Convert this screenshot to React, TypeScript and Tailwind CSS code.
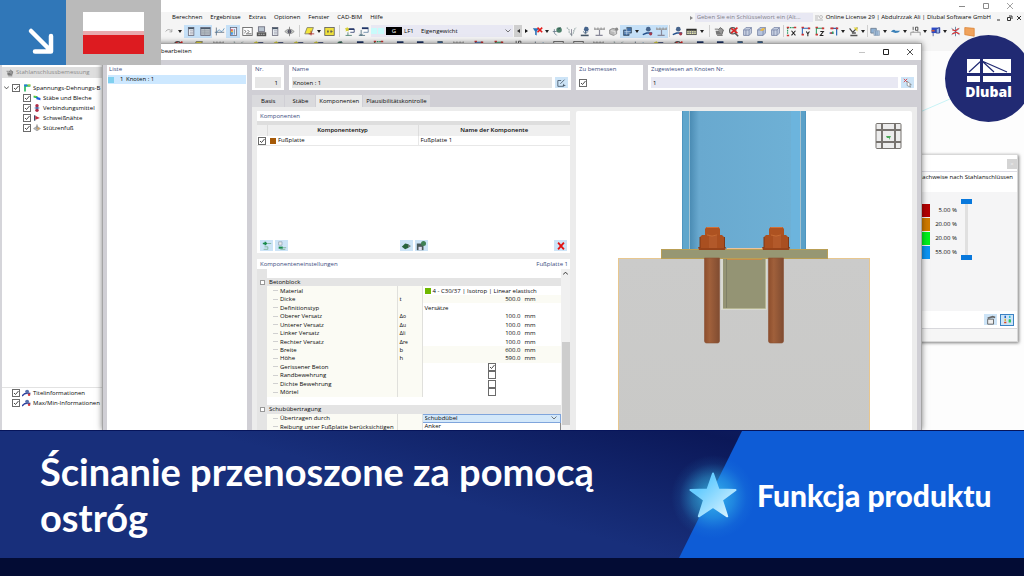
import React from 'react';

type Glyph =
  | 'undo' | 'panel' | 'grid' | 'curve' | 'rainbow' | 'form' | 'res' | 'eye' | 'para' | 'ysq' | 'star' | 'win'
  | 'funnelX' | 'leaf' | 'funnel' | 'load' | 'dim' | 'cubes' | 'steps' | 'table' | 'robot' | 'magX' | 'box' | 'boxY'
  | 'axisX' | 'axisY' | 'axisZ' | 'axisR' | 'lamp' | 'stack' | 'wing' | 'ruler' | 'monitor' | 'snow' | 'orange' | 'member';

const glyphs: Record<Glyph, React.ReactNode> = {
  undo: <path d="M2 7Q6 2 10 7M10 4v3.500H7" fill="none" stroke="#999" />,
  panel: <><rect x="3" y="2" width="7" height="10" fill="#e9eef3" stroke="#667" /><path d="M3 3h7" stroke="#456" strokeWidth="2" /><path d="M5 6h4M5 8h4M5 10h4" stroke="#889" strokeWidth=".7" /></>,
  grid: <><rect x="1" y="2" width="12" height="10" fill="#b8bfc6" stroke="#667" /><path d="M1 3h12" stroke="#456" strokeWidth="1.500" /><path d="M2 6h10M2 8h10M2 10h10M6 4v8" stroke="#8a929a" strokeWidth=".6" /></>,
  curve: <><path d="M3 2v10M1 8h12" stroke="#567" strokeWidth="1" /><path d="M3 9Q6 3 8 6T13 3" fill="none" stroke="#4a86b8" /></>,
  rainbow: <><rect x="3" y="2" width="8" height="10" fill="#eef" stroke="#667" /><path d="M5 4v3" stroke="#e33" strokeWidth="2" /><path d="M5 6v3" stroke="#dc3" strokeWidth="2" /><path d="M5 8v3" stroke="#28e" strokeWidth="2" /><path d="M8 4v7" stroke="#478" strokeWidth="1" /></>,
  form: <><rect x="1" y="2" width="12" height="10" fill="#fff" stroke="#555" /><path d="M3 5l2 2-2 2M7 5l2 2-2 2M5 10h7" fill="none" stroke="#444" /></>,
  res: <><rect x="3" y="1" width="8" height="6" fill="#b9c4cf" stroke="#667" /><rect x="1" y="8" width="12" height="5" fill="#555" /><path d="M3 10.500h8" stroke="#ddd" strokeDasharray="2 1" /></>,
  eye: <><path d="M1 7Q7 1 13 7Q7 13 1 7Z" fill="#c8ccc8" stroke="#888" /><circle cx="7" cy="7" r="2.500" fill="#556" /><path d="M7 1v12" stroke="#777" /></>,
  para: <><path d="M4 2h8l-3 8H1z" fill="#f2e53a" stroke="#776" /><path d="M9 6v6M6 10h7" stroke="#a22" /></>,
  ysq: <><rect x="1" y="2" width="12" height="10" fill="#f0e13c" stroke="#555" /><path d="M4 7h2M8 7h3M5 5v4M9 5v4" stroke="#555" /></>,
  star: <><path d="M5 6V4h8v4H8" fill="#fff" stroke="#236" /><path d="M6 4h7" stroke="#236" strokeWidth="2" /><path d="M4 1l1 2h2L5.500 5 6 7 4 6 2 7l.500-2L1 3h2z" fill="#d7cf30" /><path d="M5 8v4M2 12h8" stroke="#476" /></>,
  win: <><path d="M5 2h8v6H7" fill="#fff" stroke="#579" /><path d="M5 3h8" stroke="#236" strokeWidth="2" /><path d="M4 5v7M1 12h8M2 10l2 2 2-2" fill="none" stroke="#467" /></>,
  funnelX: <><path d="M1 3h8L6 7v5L4 11V7z" fill="#2b72b8" /><path d="M7 2l6 6M13 2l-6 6" stroke="#e31b1b" strokeWidth="2" /></>,
  leaf: <><path d="M3 4v5l3 3M1 7h5" stroke="#678" fill="none" /><circle cx="9" cy="5" r="3.500" fill="#4c7f6a" /><path d="M8 4l3-2" stroke="#244" /></>,
  funnel: <><path d="M1 2l3 3v3l3 4 3-4V5l3-3" fill="none" stroke="#9aa" strokeWidth="1.500" strokeDasharray="2 1" /><path d="M7 4v8" stroke="#778" /></>,
  load: <><path d="M7 1v8M4 7l3 3 3-3" stroke="#246" fill="none" /><circle cx="8" cy="4" r="3" fill="#46648c" /><path d="M1 12h10" stroke="#456" strokeWidth="2" /></>,
  member: <><path d="M1 11l5-2h7" stroke="#24508c" strokeWidth="2" fill="none" /><circle cx="8" cy="4" r="3" fill="#46648c" /><circle cx="11" cy="10" r="2" fill="#a33b4b" /></>,
  dim: <><path d="M1 2v3M5 2v3M9 2v3M13 2v3M1 4h12" stroke="#999" strokeWidth="1.500" /><path d="M7 5v6M2 12h9" stroke="#889" strokeWidth="1.500" /></>,
  cubes: <><path d="M2 5l4-2 5 1v6l-4 2-5-2z" fill="#b9b9b9" stroke="#888" /><path d="M4 6l5 1v4" stroke="#eee" fill="none" /><circle cx="11" cy="4" r="2" fill="#888" /></>,
  steps: <><path d="M2 12V5h4V2h6v7H9v3z" fill="#3f6ea6" stroke="#456" /><path d="M3 7h8M3 9h7M6 3v8" stroke="#cfe0f0" strokeWidth=".8" /></>,
  table: <><rect x="1" y="4" width="12" height="7" fill="#e7e9b0" stroke="#333" /><path d="M1 5h12" stroke="#222" strokeWidth="2" /><path d="M4 5v6M7 5v6M10 5v6M1 8h12" stroke="#667" strokeWidth=".8" /></>,
  robot: <><path d="M2 6h8v5H3z" fill="#777" /><path d="M5 5l3-3 4 3-2 6" fill="#999" stroke="#555" /><path d="M1 4h4M4 12h7" stroke="#555" /></>,
  magX: <><circle cx="6" cy="6" r="4" fill="#ddd" stroke="#555" strokeWidth="1.500" /><path d="M9 9l4 4" stroke="#555" strokeWidth="2" /><path d="M4 3l8 6M12 2L4 9" stroke="#d22" strokeWidth="2" /></>,
  box: <><path d="M2 5l3-3h7v7l-3 3H2z" fill="#c7d0e2" stroke="#7683a5" /><path d="M2 5h7v7M9 5l3-3M5 5v7" fill="none" stroke="#7683a5" /></>,
  boxY: <><path d="M2 5l3-3h7v7l-3 3H2z" fill="#b8c5de" stroke="#7683a5" /><path d="M2 5h7v7M9 5l3-3" fill="none" stroke="#7683a5" /><path d="M5 6l3-3h4L9 6z" fill="#efb93d" /></>,
  axisX: <><path d="M2 2v9M2 2h9" stroke="#2b9c63" strokeDasharray="2 1" strokeWidth="1.500" /><path d="M1 2h3M10 2h3M1 12h3" stroke="#c33" strokeWidth="2" /><path d="M7 6l5 6M12 6l-5 6" stroke="#222" strokeWidth="1.300" /></>,
  axisY: <><path d="M3 2v9M3 3h9" stroke="#2868b8" strokeWidth="1.300" /><path d="M2 2h3M2 11h3M10 3h3" stroke="#c33" strokeWidth="2" /><path d="M8 7l2 3 2-3M10 10v3" stroke="#222" fill="none" strokeWidth="1.300" /></>,
  axisZ: <><path d="M3 2v9M3 3h9" stroke="#2b9c63" strokeWidth="1.300" /><path d="M2 2h3M2 11h3M10 3h3" stroke="#c33" strokeWidth="2" /><path d="M8 7h4l-4 5h4" stroke="#222" fill="none" strokeWidth="1.300" /></>,
  axisR: <><path d="M11 2v10M4 3h8M2 9h5" stroke="#2868b8" strokeWidth="1.500" /><path d="M3 3h4M3 9h3M10 3h3" stroke="#c33" strokeWidth="2" /><path d="M6 7v3" stroke="#2b9c63" strokeWidth="2" /></>,
  lamp: <><path d="M2 3l4 5M6 8l6-6" stroke="#444" strokeWidth="1.500" /><path d="M7 2h5v5z" fill="#e5d741" /><path d="M3 12h9M5 9h5" stroke="#555" strokeWidth="2" /></>,
  stack: <><path d="M1 3h7v6H1z" fill="#8fb2d5" stroke="#678" /><path d="M5 6h7v6H5z" fill="#a9c2dc" stroke="#9ab" /><path d="M7 6v6M9 6v6" stroke="#7a98b8" /></>,
  wing: <path d="M1 7q4-4 6-1h6q-2 3-6 3z" fill="#3b81b8" />,
  ruler: <><path d="M1 12V8h12v4M4 8V6M10 8V6" stroke="#888" fill="none" /><path d="M4 1v4M7 1.500h3v4H7z" stroke="#333" fill="none" /></>,
  monitor: <><path d="M2 2h11v7H2z" fill="#2b49c8" /><path d="M4 9v4M8 4l4-2v7H8z" fill="#9ab6ed" stroke="#348" /><path d="M2 6h4" stroke="#c53" strokeWidth="2" /></>,
  snow: <><path d="M2 3l10 8M12 3L2 11M7 1v12" stroke="#4a6e91" /><path d="M3 5l4 1 4-3M3 10l5-2 4 2" stroke="#d33" fill="none" strokeWidth="1.500" /></>,
  orange: <path d="M1 2l12 1v10L1 11z" fill="#f0a35c" stroke="#db8438" />,
};

const Icon = ({ g, small }: { g: Glyph; small?: boolean }) => (
  <svg viewBox="0 0 14 14" className={small ? 'size-2 shrink-0' : 'size-[11px] shrink-0'} aria-hidden="true">
    {glyphs[g]}
  </svg>
);

const Tool = ({ g, on }: { g: Glyph; on?: boolean }) => (
  <button aria-label={g} className={`flex h-[13px] w-[14px] shrink-0 items-center justify-center ${on ? 'bg-[#c5e0f7]' : ''}`}>
    <Icon g={g} />
  </button>
);

const Caret = ({ on, wide }: { on?: boolean; wide?: boolean }) => (
  <button aria-label="Mehr" className={`flex h-[13px] shrink-0 items-center justify-center ${wide ? 'w-2' : 'w-[6px]'} ${on ? 'bg-[#c5e0f7]' : ''}`}>
    <svg viewBox="0 0 4 3" className="h-[3px] w-1"><path d="M0 0h4L2 3z" fill="#222" /></svg>
  </button>
);

const Sep = ({ wide }: { wide?: boolean }) => (
  <span className={`flex h-3 shrink-0 justify-center ${wide ? 'w-[6px]' : 'w-[2px]'}`}>
    <span className="w-px bg-[#cfcfcf]" />
  </span>
);

const Check = ({ id, checked, label }: { id: string; checked?: boolean; label?: string }) => (
  <span className="inline-grid size-2 shrink-0">
    <input
      id={id}
      type="checkbox"
      defaultChecked={checked}
      aria-label={label}
      className="peer col-start-1 row-start-1 size-2 appearance-none border border-[#6b6b6b] bg-white"
    />
    <svg viewBox="0 0 8 8" className="pointer-events-none invisible col-start-1 row-start-1 size-2 peer-checked:visible">
      <path d="M2 4l1.500 1.500L6.500 2" fill="none" stroke="#333" strokeWidth=".9" />
    </svg>
  </span>
);

const WinButtons = ({ muted }: { muted?: boolean }) => (
  <div className={`flex items-center gap-[18px] ${muted ? 'text-[#8a8a8a]' : 'text-[#222]'}`}>
    <button aria-label="Minimieren" className={muted ? '' : 'text-[#c4c4c4]'}>
      <svg viewBox="0 0 6 6" className="size-[6px]"><path d="M0 3.500h6" stroke="currentColor" /></svg>
    </button>
    <button aria-label="Maximieren">
      <svg viewBox="0 0 6 6" className="size-[6px]"><path d="M.500 .500h5v5h-5z" fill="none" stroke="currentColor" /></svg>
    </button>
    <button aria-label="Schließen">
      <svg viewBox="0 0 6 6" className="size-[6px]"><path d="M0 0l6 6M6 0L0 6" stroke="currentColor" strokeWidth=".8" /></svg>
    </button>
  </div>
);

const menu = ['Berechnen', 'Ergebnisse', 'Extras', 'Optionen', 'Fenster', 'CAD-BIM', 'Hilfe'];

function MainToolbar() {
  return (
    <div className="flex h-4 items-center pl-[162px]">
      <Tool g="undo" /><Caret wide />
      <Tool g="panel" on /><Tool g="grid" on /><Tool g="curve" /><Tool g="rainbow" on /><Tool g="form" />
      <Tool g="res" /><Tool g="panel" /><Tool g="eye" /><Sep wide />
      <Tool g="para" /><Caret /><Tool g="ysq" /><Sep wide /><Tool g="star" /><Tool g="win" />
      <div className="mx-px flex h-3 w-[142px] shrink-0 items-center bg-[#e8e8f3] pr-[2px]">
        <span className="mr-px h-[6px] w-[6px] bg-[#c9fbfb]" />
        <span className="mr-[2px] h-[6px] w-[6px] bg-[#c9fbfb]" />
        <span className="mr-[2px] flex h-2 w-4 items-center justify-center bg-black text-[6px] leading-none text-white">G</span>
        <label htmlFor="loadcase" className="mr-[7px] w-[10px]">LF1</label>
        <select id="loadcase" className="flex-1 appearance-none bg-transparent leading-[10px] outline-none">
          <option>Eigengewicht</option>
        </select>
        <svg viewBox="0 0 6 4" className="h-1 w-[6px]"><path d="M.500 .500L3 3 5.500 .500" fill="none" stroke="#555" strokeWidth=".8" /></svg>
      </div>
      <button aria-label="Zurück" className="flex h-3 w-2 shrink-0 items-center justify-center bg-[#cfcfcf]">
        <svg viewBox="0 0 3 4" className="h-1 w-[3px]"><path d="M3 0v4L0 2z" fill="#333" /></svg>
      </button>
      <button aria-label="Weiter" className="flex h-3 w-2 shrink-0 items-center justify-center">
        <svg viewBox="0 0 3 4" className="h-1 w-[3px]"><path d="M0 0v4l3-2z" fill="#111" /></svg>
      </button>
      <Tool g="funnelX" /><Caret /><Tool g="leaf" /><Tool g="funnel" /><Tool g="load" /><Tool g="dim" /><Tool g="cubes" />
      <Tool g="steps" on /><Caret on /><Tool g="member" on /><Tool g="dim" on /><Sep />
      <Tool g="member" /><Tool g="table" /><Caret wide /><Sep wide />
      <Tool g="robot" /><Tool g="magX" /><Tool g="box" /><Tool g="boxY" /><Tool g="box" /><Sep />
      <Tool g="axisX" /><Tool g="axisY" /><Tool g="axisZ" /><Tool g="axisR" /><Caret />
      <Tool g="lamp" /><Caret /><Sep /><Tool g="stack" /><Caret /><Tool g="wing" /><Caret /><Tool g="ruler" /><Caret />
      <Tool g="monitor" /><Caret /><Tool g="snow" /><Tool g="orange" />
    </div>
  );
}

const lowerTools: Glyph[] = [
  'magX', 'para', 'dim', 'funnel', 'star', 'star', 'star', 'star', 'leaf', 'win', 'axisX', 'win', 'win', 'steps', 'dim',
  'axisY', 'axisZ', 'ruler', 'curve', 'form', 'form', 'dim', 'funnel', 'curve', 'star', 'magX', 'win', 'win', 'steps', 'steps',
];

const tree: { label: string; icon: React.ReactNode }[] = [
  { label: 'Stäbe und Bleche', icon: <><path d="M1 3l7 1v4L1 6z" fill="#22c04c" /><path d="M6 5l7 2v4L6 9z" fill="#1f5fe0" /><path d="M1 3h4v2z" fill="#ddd02c" /></> },
  { label: 'Verbindungsmittel', icon: <><circle cx="7" cy="3" r="3" fill="#b12b45" /><circle cx="7" cy="11" r="3" fill="#b12b45" /><path d="M3 7h8M7 5v4" stroke="#34569a" strokeWidth="2" /></> },
  { label: 'Schweißnähte', icon: <><path d="M3 2v10" stroke="#235" strokeWidth="2" /><path d="M4 3l8 4-8 3z" fill="#c22d3d" /></> },
  { label: 'Stützenfuß', icon: <><path d="M1 8l6-4 6 4-6 4z" fill="#b7bcc2" stroke="#888" /><path d="M7 1v8" stroke="#888" strokeWidth="2" /><circle cx="9" cy="8" r="2" fill="#d8a35a" /></> },
];

function Navigator() {
  return (
    <aside className="flex w-[105px] shrink-0 flex-col overflow-hidden border-l-2 border-[#d5d5da] bg-white pt-[16px] whitespace-nowrap">
      <h2 className="flex h-[11px] shrink-0 items-center gap-[2px] bg-[#dedede] pl-1 text-[#8a8a8a]">
        <Icon g="robot" small />Stahlanschlussbemessung
      </h2>
      <ul className="flex-1 pt-[5px]">
        <li className="flex h-[10px] items-center gap-[2px] pl-[2px]">
          <svg viewBox="0 0 6 4" className="mr-px h-1 w-[5px]"><path d="M0 0l3 3 3-3" fill="none" stroke="#333" /></svg>
          <Check id="t-root" checked />
          <svg viewBox="0 0 14 14" className="ml-px size-2 shrink-0"><path d="M2 1v12h3V5h8V1z" fill="#2fba64" /><path d="M2 1h5v3H2z" fill="#2976e6" /><path d="M9 1h4v2H9z" fill="#d6cc39" /></svg>
          <label htmlFor="t-root">Spannungs-Dehnungs-B</label>
        </li>
        {tree.map((t, i) => (
          <li key={t.label} className="flex h-[10px] items-center gap-[2px] pl-[21px]">
            <Check id={`t-${i}`} checked />
            <svg viewBox="0 0 14 14" className="size-2 shrink-0">{t.icon}</svg>
            <label htmlFor={`t-${i}`}>{t.label}</label>
          </li>
        ))}
      </ul>
      <ul className="h-[43px] shrink-0 border-t border-[#e2e2e2]">
        {['Titelinformationen', 'Max/Min-Informationen'].map((t) => (
          <li key={t} className="flex h-[10px] items-center gap-[2px] pl-[10px]">
            <Check id={t} checked />
            <svg viewBox="0 0 14 14" className="size-[9px] shrink-0"><path d="M0 11q4-6 13-4" fill="none" stroke="#2b3f9e" strokeWidth="2" /><circle cx="8" cy="4" r="3" fill="#5770ad" /><circle cx="11" cy="9" r="2" fill="#d43b3b" /></svg>
            <label htmlFor={t}>{t}</label>
          </li>
        ))}
      </ul>
    </aside>
  );
}

const Field = ({ label, id, className, children }: { label: string; id: string; className: string; children: React.ReactNode }) => (
  <div className={`flex h-[25px] flex-col justify-between bg-white px-[3px] pb-[2px] ${className}`}>
    <label htmlFor={id} className="text-[#3c4d80]">{label}</label>
    <div className="flex items-center gap-[3px]">{children}</div>
  </div>
);

const SmallButton = ({ label, children }: { label: string; children: React.ReactNode }) => (
  <button aria-label={label} className="flex h-[11px] w-[13px] shrink-0 items-center justify-center bg-[#cde4f7]">
    <svg viewBox="0 0 12 12" className="size-[10px]">{children}</svg>
  </button>
);

type Row = { name: string; sym?: string; sub?: string; value?: string; unit?: string; check?: boolean; kind: 'num' | 'calc' | 'text' | 'check' | 'material' };

const concreteRows: Row[] = [
  { name: 'Material', kind: 'material', value: '4 - C30/37 | Isotrop | Linear elastisch' },
  { name: 'Dicke', sym: 't', kind: 'calc', value: '500.0', unit: 'mm' },
  { name: 'Definitionstyp', kind: 'text', value: 'Versätze' },
  { name: 'Oberer Versatz', sym: 'Δ', sub: 'o', kind: 'num', value: '100.0', unit: 'mm' },
  { name: 'Unterer Versatz', sym: 'Δ', sub: 'u', kind: 'num', value: '100.0', unit: 'mm' },
  { name: 'Linker Versatz', sym: 'Δ', sub: 'li', kind: 'num', value: '100.0', unit: 'mm' },
  { name: 'Rechter Versatz', sym: 'Δ', sub: 're', kind: 'num', value: '100.0', unit: 'mm' },
  { name: 'Breite', sym: 'b', kind: 'calc', value: '600.0', unit: 'mm' },
  { name: 'Höhe', sym: 'h', kind: 'calc', value: '590.0', unit: 'mm' },
  { name: 'Gerissener Beton', kind: 'check', check: true },
  { name: 'Randbewehrung', kind: 'check', check: false },
  { name: 'Dichte Bewehrung', kind: 'check', check: false },
  { name: 'Mörtel', kind: 'check', check: false },
];

const NameCells = ({ name, sym, sub }: { name: string; sym?: string; sub?: string }) => (
  <>
    <td className="bg-[#e4e4e4] p-0" />
    <td className="border-r border-[#e0e0dc] bg-[#fbfbf4] p-0">
      <span className="flex items-center gap-[2px] overflow-visible whitespace-nowrap"><span className="ml-[6px] h-px w-[5px] bg-[#d0d0d0]" />{name}</span>
    </td>
    <td className="border-r border-[#e0e0dc] bg-[#fbfbf4] p-0 pl-[2px]">
      {sym}{sub && <span className="text-[5px]">{sub}</span>}
    </td>
  </>
);

const GroupRow = ({ title }: { title: string }) => (
  <tr>
    <td className="bg-[#e4e4e4] p-0">
      <button aria-label={`${title} einklappen`} className="ml-[3px] block size-[5px] border border-[#999] bg-white" />
    </td>
    <td colSpan={4} className="bg-[#e4e4e4] p-0 pl-[2px]">{title}</td>
  </tr>
);

function SettingsTable() {
  return (
    <table className="h-[153px] w-full table-fixed border-collapse leading-[8px]">
      <colgroup>
        <col className="w-[10px]" /><col className="w-[130px]" /><col className="w-[25px]" /><col /><col className="w-[39px]" />
      </colgroup>
      <tbody>
        <GroupRow title="Betonblock" />
        {concreteRows.map((r) => (
          <tr key={r.name}>
            <NameCells name={r.name} sym={r.sym} sub={r.sub} />
            {r.kind === 'num' || r.kind === 'calc' ? (
              <>
                <td className={`p-0 pr-px text-right ${r.kind === 'calc' ? 'bg-[#fbfbf4]' : ''}`}>{r.value}</td>
                <td className={`p-0 pl-[3px] ${r.kind === 'calc' ? 'bg-[#fbfbf4]' : ''}`}>{r.unit}</td>
              </>
            ) : (
              <td colSpan={2} className="p-0 px-[2px]">
                {r.kind === 'material' && (
                  <span className="flex items-center gap-[2px]"><span className="size-[6px] bg-[#6fb800]" />{r.value}</span>
                )}
                {r.kind === 'text' && r.value}
                {r.kind === 'check' && <span className="flex justify-center"><Check id={r.name} label={r.name} checked={r.check} /></span>}
              </td>
            )}
          </tr>
        ))}
        <tr><td className="bg-[#e4e4e4] p-0" /><td colSpan={4} className="p-0">&nbsp;</td></tr>
        <GroupRow title="Schubübertragung" />
        <tr>
          <NameCells name="Übertragen durch" />
          <td colSpan={2} className="border border-[#7fa5dc] bg-[#d3e8fa] p-0">
            <span className="flex items-center pr-[3px] pl-[2px]">
              <select aria-label="Übertragen durch" className="h-[7px] flex-1 appearance-none bg-transparent leading-[7px] outline-none">
                <option>Schubdübel</option><option>Anker</option>
              </select>
              <svg viewBox="0 0 6 4" className="h-1 w-[6px]"><path d="M.500 .500L3 3 5.500 .500" fill="none" stroke="#555" strokeWidth=".8" /></svg>
            </span>
          </td>
        </tr>
        <tr>
          <NameCells name="Reibung unter Fußplatte berücksichtigen" />
          <td colSpan={2} className="border-r border-[#888] p-0 pl-[2px] align-top leading-[6px]">Anker</td>
        </tr>
      </tbody>
    </table>
  );
}

function ModelView() {
  return (
    <svg viewBox="576 111 336 319" preserveAspectRatio="xMidYMin slice" className="h-full w-full" role="img" aria-label="3D-Ansicht der Fußplatte">
      <defs>
        <linearGradient id="web"><stop offset="0" stopColor="#4b8cb4" /><stop offset=".09" stopColor="#69a9cf" /><stop offset="1" stopColor="#6eb0d5" /></linearGradient>
        <linearGradient id="rod"><stop offset="0" stopColor="#8d4e2d" /><stop offset=".35" stopColor="#a0603b" /><stop offset="1" stopColor="#804c31" /></linearGradient>
        <linearGradient id="block" x1="0" y1="0" x2="0" y2="1"><stop offset="0" stopColor="#cbcbca" /><stop offset="1" stopColor="#c9c9c7" /></linearGradient>
      </defs>
      <rect x="682" y="111" width="124" height="139" fill="#6db4dc" />
      <rect x="682" y="111" width="7" height="139" fill="#5fa6cc" />
      <rect x="690" y="111" width="101" height="139" fill="url(#web)" />
      <rect x="791" y="111" width="9" height="139" fill="#6cb4dd" />
      <rect x="801" y="111" width="5" height="139" fill="#5aa0c8" />
      <path d="M689.500 111v139M800.500 111v139" stroke="#a5c3d1" />
      <path d="M682.500 111v139M805.500 111v139" stroke="#4f95bf" />
      <rect x="618.500" y="258.500" width="251" height="180" fill="url(#block)" stroke="#e8c78f" />
      <rect x="721" y="258" width="46" height="52" fill="#d9dad2" />
      <rect x="723" y="258" width="42" height="51" fill="#949474" />
      <path d="M726.500 259v49" stroke="#7f8067" />
      <path d="M723 308.500h42.500V259" fill="none" stroke="#b6b693" />
      <path d="M727 259.500h35" stroke="#c58c4b" />
      <rect x="661.500" y="249.500" width="166" height="9" fill="#979773" stroke="#b99f56" />
      <path d="M727 248.500h36" stroke="#edc49b" />
      {[712, 776].map((x) => (
        <g key={x} transform={`translate(${x} 0)`}>
          <path d="M-7.500 258h15v83q0 2-2 2h-11q-2 0-2-2z" fill="url(#rod)" stroke="#8a5034" strokeWidth=".6" />
          <path d="M-14 247h28l-1 3h-26z" fill="#96431a" />
          <path d="M-12 237l2-2h20l2 2v11h-24z" fill="#a94f20" />
          <path d="M-3 236h8v12h-8z" fill="#b2592a" />
          <path d="M-12 237v11M12.500 237v11" stroke="#7f3917" />
          <path d="M-7 229l1.500-2h12L8 229v6H-7z" fill="#ad5221" />
          <path d="M-5.500 227.500h12" stroke="#d27138" />
          <path d="M-5 235q5 2 10 0" fill="none" stroke="#cd7138" strokeWidth=".8" />
        </g>
      ))}
      <g fill="#ececec" stroke="#77736f">
        <rect x="876" y="123.500" width="25" height="25" rx="1" />
        <path d="M882 123.500v25M895 123.500v25M876 130h25M876 142h25" strokeWidth="2" />
      </g>
      <path d="M886 136h5l-2 4v-2h-2z" fill="#4aa858" />
    </svg>
  );
}

function Components() {
  return (
    <section className="flex h-[142px] shrink-0 flex-col bg-white">
      <h3 className="h-[10px] px-[3px] leading-[11px] text-[#3c4d80]">Komponenten</h3>
      <table className="w-full table-fixed border-collapse leading-[9px]">
        <colgroup><col className="w-[10px]" /><col /><col className="w-[152px]" /></colgroup>
        <thead>
          <tr className="h-1 bg-[#dedede]"><td className="p-0" colSpan={3} /></tr>
          <tr className="bg-[#efefef] leading-[11px]">
            <th className="border-r border-[#ddd] p-0" />
            <th className="border-r border-[#ddd] p-0 font-semibold">Komponententyp</th>
            <th className="p-0 font-semibold">Name der Komponente</th>
          </tr>
        </thead>
        <tbody>
          <tr className="border-b border-[#e8e8e8]">
            <td className="p-0 pl-px"><span className="flex"><Check id="comp" label="Fußplatte aktiv" checked /></span></td>
            <td className="border-r border-[#e8e8e8] p-0 pl-[3px]"><span className="flex items-center gap-[2px]"><span className="size-[6px] bg-[#a65a08]" />Fußplatte</span></td>
            <td className="p-0 pl-[2px]">Fußplatte 1</td>
          </tr>
        </tbody>
      </table>
      <div className="mt-auto flex justify-between px-[3px] pb-[2px]">
        <span className="flex w-[28px] gap-[2px]">
          <SmallButton label="Einfügen davor"><path d="M1 3h5M4 1v4" stroke="#198b4b" strokeWidth="2" /><path d="M6 3h5M3 7h4v3H2" stroke="#7bb396" fill="none" /></SmallButton>
          <SmallButton label="Einfügen danach"><path d="M2 1h4v4H2z" stroke="#9ab" fill="#eee" /><path d="M2 8h5" stroke="#198b4b" strokeWidth="2.500" /><path d="M7 8h4M4 10h6" stroke="#7bb396" /></SmallButton>
        </span>
        <span className="flex gap-[2px]">
          <SmallButton label="Bibliothek"><path d="M1 7l4-4 4 1v4l-4 2z" fill="#27633c" /><path d="M8 4l4 2-3 2" fill="#6a776e" /></SmallButton>
          <SmallButton label="Speichern"><path d="M1 3h8v8H1z" fill="#4c5a5c" /><path d="M3 7h4v4H3z" fill="#dde" /><circle cx="9" cy="3" r="3" fill="#3f8055" /></SmallButton>
        </span>
        <span className="flex w-[28px] justify-end">
          <SmallButton label="Löschen"><path d="M2.500 2l7 8M9.500 2l-7 8" stroke="#e21414" strokeWidth="2.200" /></SmallButton>
        </span>
      </div>
    </section>
  );
}

function Dialog() {
  const tabs = ['Basis', 'Stäbe', 'Komponenten', 'Plausibilitätskontrolle'];
  return (
    <section className="absolute top-[43px] right-[102px] bottom-0 left-[102px] flex flex-col overflow-hidden border-x border-t border-[#a5a5a5] bg-[#d0cfd5] shadow-[0_0_6px_rgba(0,0,0,0.5)]">
      <header className="flex h-4 shrink-0 items-center justify-between bg-white pr-[8px] pb-px pl-[58px]">
        <h1>bearbeiten</h1>
        <WinButtons />
      </header>
      <div className="flex min-h-0 flex-1 gap-[5px] px-1 pt-[5px]">
        <div className="flex w-[140px] shrink-0 flex-col bg-white">
          <h2 className="h-[10px] px-[2px] text-[#3c4d80]">Liste</h2>
          <ul className="flex-1 px-px">
            <li className="flex h-[9px] items-center bg-[#cde8ff]">
              <span className="mr-[6px] size-[6px] bg-[#7fd0ef]" /><span className="w-[6px]">1</span>Knoten : 1
            </li>
          </ul>
        </div>
        <div className="flex min-w-0 flex-1 flex-col">
          <div className="flex gap-[5px]">
            <Field label="Nr." id="nr" className="w-8">
              <input id="nr" defaultValue="1" className="h-[11px] w-full bg-[#e6e6e6] px-[3px] text-right outline-none" />
            </Field>
            <Field label="Name" id="name" className="w-[282px]">
              <input id="name" defaultValue="Knoten : 1" className="h-[11px] min-w-0 flex-1 bg-[#e6e6e6] px-px outline-none" />
              <SmallButton label="Name bearbeiten"><path d="M5 3H1v7h7V7M4 7l5-5M7 9h3" fill="none" stroke="#456" /></SmallButton>
            </Field>
            <Field label="Zu bemessen" id="design" className="w-[67px]">
              <span className="flex h-[11px] items-center"><Check id="design" checked /></span>
            </Field>
            <Field label="Zugewiesen an Knoten Nr." id="assigned" className="flex-1">
              <input id="assigned" defaultValue="1" className="h-[11px] min-w-0 flex-1 bg-[#e8e8f3] px-[2px] outline-none" />
              <SmallButton label="Knoten wählen"><path d="M1 1l4 4M5 1L1 5" stroke="#d33" /><path d="M5 4l5 4H8l1 3-2-1-2-1z" fill="#fff" stroke="#666" strokeWidth=".7" /></SmallButton>
            </Field>
          </div>
          <nav className="mt-[5px] flex h-3 shrink-0">
            {tabs.map((t) => (
              <button key={t} className={`mr-px px-[3px] first:px-[9px] nth-[2]:px-[7px] ${t === 'Komponenten' ? 'bg-[#ececec]' : 'bg-[#dadadd]'}`}>{t}</button>
            ))}
          </nav>
          <div className="flex min-h-0 flex-1 gap-[6px] bg-[#ececec] px-[5px] pt-1">
            <div className="flex w-[313px] shrink-0 flex-col gap-[6px] overflow-hidden">
              <Components />
              <section className="flex min-h-0 flex-1 flex-col bg-white">
                <h3 className="flex h-[10px] shrink-0 justify-between pr-[2px] pl-[3px] leading-[11px] text-[#3c4d80]">
                  <span>Komponenteneinstellungen</span><span>Fußplatte 1</span>
                </h3>
                <div className="flex min-h-0 flex-1">
                  <div className="min-w-0 flex-1">
                    <div className="h-[9px] w-[10px] bg-[#e4e4e4]" />
                    <SettingsTable />
                  </div>
                  <div className="flex w-[9px] shrink-0 flex-col items-center bg-[#f0f0f0] pt-[2px]">
                    <svg viewBox="0 0 6 4" className="h-1 w-[5px] shrink-0"><path d="M0 4l3-3 3 3" fill="none" stroke="#333" strokeWidth="1.200" /></svg>
                    <span className="mt-[67px] h-[83px] w-2 shrink-0 bg-[#cdcdcd]" />
                  </div>
                </div>
              </section>
            </div>
            <div className="min-w-0 flex-1 rounded-t-[2px] bg-white"><ModelView /></div>
          </div>
        </div>
      </div>
    </section>
  );
}

function Legend() {
  const items = [
    { value: '5.00 %', color: 'bg-[#b40000]' },
    { value: '20.00 %', color: 'bg-[#cf7a00]' },
    { value: '20.00 %', color: 'bg-[#00f01c]' },
    { value: '55.00 %', color: 'bg-[#0b94f2]' },
  ];
  return (
    <section className="absolute top-[154px] right-[6px] flex w-[138px] flex-col border border-[#d8d8d8] bg-white shadow-[1px_1px_3px_rgba(0,0,0,0.5)]">
      <div className="flex h-4 justify-end pt-1"><button aria-label="Schließen" className="h-[10px] w-[10px] bg-[#d4d4d4] text-[6px] leading-none text-[#eee]">×</button></div>
      <h2 className="h-[21px] border-t border-[#dcdce4] pt-px pr-1 text-right whitespace-nowrap">Nachweise nach Stahlanschlüssen</h2>
      <div className="flex h-[119px] items-start gap-1 bg-[#f5f5f6] pt-[7px] pl-[39px]">
        <ul className="pt-1">
          {items.map((i, n) => (
            <li key={n} className="flex h-[14px] items-center">
              <span className={`h-[13px] w-[10px] ${i.color}`} /><span className="w-[27px] text-right">{i.value}</span>
            </li>
          ))}
        </ul>
        <div className="flex w-[11px] flex-col items-center">
          <span className="h-[5px] w-[11px] bg-[#0878dc]" /><span className="h-[51px] w-[3px] bg-[#e0e0e0]" /><span className="h-[5px] w-[11px] bg-[#0878dc]" />
        </div>
      </div>
      <div className="flex h-[18px] items-center justify-end gap-[3px] border-b border-[#d8d8dc] bg-white pr-[3px]">
        <SmallButton label="Optionen"><path d="M2 5h7v6H2z" fill="#eee" stroke="#555" /><path d="M2 4l6-2 3 1" stroke="#666" strokeWidth="2" fill="none" /></SmallButton>
        <button aria-label="Skala" className="flex h-3 w-[14px] items-center justify-center border border-[#3b82c4] bg-[#cde4f7]">
          <svg viewBox="0 0 12 12" className="size-[9px]"><path d="M3 1v3M9 6v3" stroke="#2465c9" strokeWidth="2" /><path d="M3 5v3" stroke="#ddb13d" strokeWidth="2" /><path d="M3 9v2" stroke="#dc4a21" strokeWidth="3" /><path d="M9 1v3" stroke="#35c1d3" strokeWidth="2" /><path d="M9 6v4" stroke="#2fc854" strokeWidth="3" /></svg>
        </button>
      </div>
      <div className="h-3 bg-[#f6f6f6]" />
    </section>
  );
}

function Workspace() {
  return (
    <div className="flex h-full flex-col bg-[#fdfdfd]">
      <div className="flex h-3 shrink-0 items-center justify-end bg-white pr-[11px]"><WinButtons muted /></div>
      <div className="flex h-[11px] shrink-0 items-center bg-[#f5f5f5] pr-[3px] pl-[172px] whitespace-nowrap">
        <nav className="flex gap-2">
          {menu.map((m) => <a key={m} href="#">{m}</a>)}
        </nav>
        <div className="ml-auto flex items-center">
          <svg viewBox="0 0 3 4" className="mr-[2px] h-1 w-[3px]"><path d="M0 0v4l3-2z" fill="#888" /></svg>
          <input aria-label="Suche" placeholder="Geben Sie ein Schlüsselwort ein (Alt..." className="h-[9px] w-[118px] bg-[#e8e8f3] px-[2px] outline-none placeholder:text-[#80808a]" />
          <svg viewBox="0 0 9 6" className="mx-[2px] h-[6px] w-[9px]"><path d="M0 1h4M0 3h3M0 5h8" stroke="#bbb" /><circle cx="6" cy="2" r="1.500" fill="none" stroke="#aaa" strokeWidth=".7" /></svg>
          <span className="mr-[6px]">Online License 29 | Abdulrzzak Ali | Dlubal Software GmbH</span>
          <svg viewBox="0 0 24 6" className="h-[6px] w-6"><path d="M0 5h3M10.500 2.500h3v3h-3zM12 1h3v3M20 1l4 4M24 1l-4 4" fill="none" stroke="#333" /></svg>
        </div>
      </div>
      <div className="shrink-0 bg-[#f5f5f5]">
        <MainToolbar />
        <div className="flex h-3 items-center overflow-hidden pt-px pl-[168px]">
          {lowerTools.map((g, i) => <span key={i} className="flex w-5 shrink-0 justify-center"><Icon g={g} /></span>)}
        </div>
      </div>
      <div className="flex min-h-0 flex-1"><Navigator /></div>
    </div>
  );
}

function Badges() {
  return (
    <>
      <div className="absolute top-0 left-0 flex h-[65px]">
        <div className="flex w-[66px] items-end justify-end bg-[#3077b8] pr-[11px] pb-[10px]">
          <svg viewBox="0 0 28 28" className="size-[28px]"><path d="M4 4l20 20M24 9v15.500H8" fill="none" stroke="#fff" strokeWidth="4.500" strokeLinecap="round" strokeLinejoin="round" /></svg>
        </div>
        <div className="flex w-[95px] items-center justify-center bg-[#bababa]">
          <div className="flex h-[42px] w-[61px] flex-col">
            <span className="flex-1 bg-white" /><span className="h-1 bg-[#e8aaae]" /><span className="h-[19px] bg-[#dd1b20]" />
          </div>
        </div>
      </div>
      <div className="absolute top-[35px] -right-[8px] flex size-[87px] flex-col items-center rounded-full bg-[#212a73] pt-6">
        <svg viewBox="0 0 44 23" className="h-[23px] w-11 shrink-0">
          <path d="M0 0h44v14H0zM0 17h44v6H0z" fill="#fff" />
          <path d="M14.500 0v23" stroke="#212a73" strokeWidth="3" />
          <path d="M14 2L2 13M15 2l12 11M15 2l25 11" stroke="#212a73" strokeWidth="1.200" />
        </svg>
        <span className="pt-[2px] font-['Open_Sans'] text-[14px] leading-4 font-extrabold text-white">Dlubal</span>
      </div>
    </>
  );
}

function Banner() {
  return (
    <footer className="shrink-0 bg-[#030c34] pb-[18px] font-['Lato',sans-serif] text-white">
      <div className="flex min-h-[128px] border-t border-[#06145a] bg-[linear-gradient(15deg,#182f7b_0%,#182f7b_45%,#0b1858_78%,#14246a_100%)]">
        <h2 className="flex-1 self-center pb-[2px] pl-10 text-[38px] leading-[46px] font-bold">Ścinanie przenoszone za pomocą<br />ostróg</h2>
        <div className="relative flex w-[345px] shrink-0 items-center gap-5 pl-[10px]">
          <div className="absolute inset-0 bg-[#0e5cd6] [clip-path:polygon(63px_0,100%_0,100%_100%,0_100%)]" />
          <svg viewBox="0 0 48 46" className="relative h-[46px] w-12 shrink-0 overflow-visible">
            <defs>
              <linearGradient id="star" x1="0" y1="0" x2="1" y2="1"><stop offset=".3" stopColor="#69cdff" /><stop offset="1" stopColor="#e5f7ff" /></linearGradient>
              <radialGradient id="glow"><stop offset="0" stopColor="#3fc8f5" stopOpacity=".85" /><stop offset=".5" stopColor="#35b9ec" stopOpacity=".45" /><stop offset=".8" stopColor="#2fa5e6" stopOpacity=".1" /><stop offset="1" stopColor="#2a9be6" stopOpacity="0" /></radialGradient>
            </defs>
            <circle cx="24" cy="25" r="42" fill="url(#glow)" />
            <path d="M24 1.500L29.500 17.500 46.500 17.900 33 28 38.200 44.300 24 34.900 9.800 44.300 15 28 1.500 17.900 18.500 17.500z" fill="url(#star)" stroke="url(#star)" strokeWidth="2" strokeLinejoin="round" />
          </svg>
          <p className="relative text-[30px] leading-8 font-black whitespace-nowrap">Funkcja produktu</p>
        </div>
      </div>
    </footer>
  );
}

export default function App() {
  return (
    <div className="flex h-screen flex-col overflow-hidden font-['Open_Sans','Noto_Sans',sans-serif] text-[6px] leading-[9px] font-medium text-[#080808]">
      <main className="relative min-h-0 flex-1 overflow-hidden">
        <Workspace />
        <svg viewBox="0 0 104 30" className="absolute top-[84px] right-0 h-[30px] w-[104px]"><path d="M0 28L60 2" stroke="#c8f3f6" /></svg>
        <Legend />
        <Dialog />
        <Badges />
      </main>
      <Banner />
    </div>
  );
}
